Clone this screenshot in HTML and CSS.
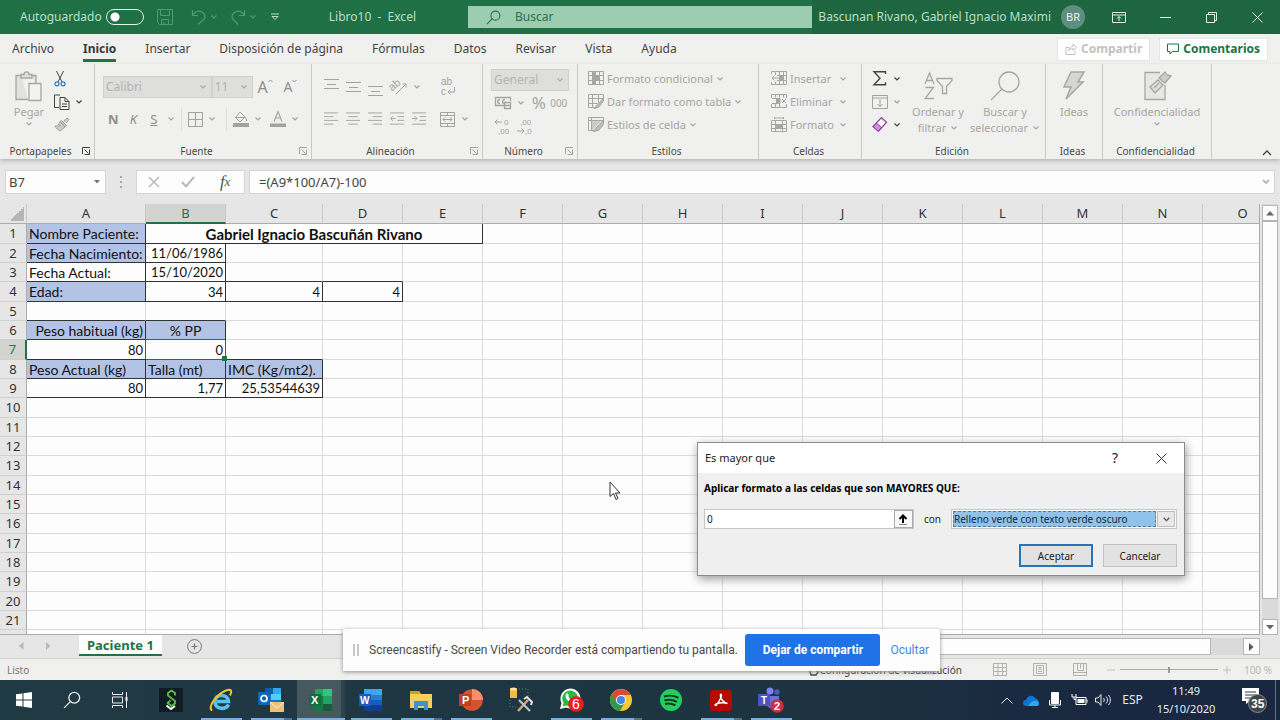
FILE: index.html
```html
<!DOCTYPE html>
<html lang="es">
<head>
<meta charset="utf-8">
<title>Libro10 - Excel</title>
<link rel="stylesheet" href="styles.css">
</head>
<body>
<svg class="defs" aria-hidden="true">
  <symbol id="chev" viewBox="0 0 8 8"><path d="M1.500 2.500 4 5l2.500-2.500" fill="none" stroke="currentColor" stroke-width="1.200"/></symbol>
  <symbol id="launch" viewBox="0 0 10 10"><path d="M1.500 8V1.500H9M3.500 3.500l4 4M8.500 3.500v5h-5" fill="none" stroke="currentColor"/></symbol>
  <symbol id="save" viewBox="0 0 16 16"><path d="M.5.500h15v15h-13l-2-2zM3.500.500v6h9v-6M4.500 15.500v-5h7v5M7 13v2" fill="none" stroke="currentColor"/></symbol>
  <symbol id="undo" viewBox="0 0 16 16"><path d="M1.500 1v5.500H7M1.500 6.500C4 3 7 1.500 10 2.500c5 2 5 7 1.500 9L7 15.500" fill="none" stroke="currentColor" stroke-width="1.200"/></symbol>
  <symbol id="redo" viewBox="0 0 16 16"><path d="M14.500 1v5.500H9M14.500 6.500C12 3 9 1.500 6 2.500c-5 2-5 7-1.500 9L8 15.500" fill="none" stroke="currentColor" stroke-width="1.200"/></symbol>
  <symbol id="mag" viewBox="0 0 16 16"><path d="M1 15l6-6" stroke="currentColor" stroke-width="1.200"/><circle cx="10" cy="6" r="4.800" fill="none" stroke="currentColor" stroke-width="1.200"/></symbol>
  <symbol id="left" viewBox="0 0 16 14"><path d="M0 .500h15M0 4.500h10M0 8.500h15M0 12.500h10" stroke="currentColor"/></symbol>
  <symbol id="center" viewBox="0 0 16 14"><path d="M0 .500h15M2.500 4.500h10M0 8.500h15M2.500 12.500h10" stroke="currentColor"/></symbol>
  <symbol id="right" viewBox="0 0 16 14"><path d="M0 .500h15M5 4.500h10M0 8.500h15M5 12.500h10" stroke="currentColor"/></symbol>
  <symbol id="outd" viewBox="0 0 16 14"><path d="M0 .500h15M8 4.500h7M8 8.500h7M0 12.500h15M6 6.500H1M3 4 .700 6.500 3 9" fill="none" stroke="currentColor"/></symbol>
  <symbol id="ind" viewBox="0 0 16 14"><path d="M0 .500h15M8 4.500h7M8 8.500h7M0 12.500h15M0 6.500h5M3 4l2.300 2.500L3 9" fill="none" stroke="currentColor"/></symbol>
  <symbol id="grid" viewBox="0 0 16 16"><path d="M.5.500h15v15H.5zM8 .500v15M.5 8h15" fill="none" stroke="currentColor" stroke-width="1.200"/></symbol>
</svg>

<header class="titlebar">
  <div class="title-left">
    <label class="autosave">Autoguardado <input type="checkbox" class="toggle"></label>
    <div class="quick">
      <button aria-label="Guardar"><svg width="16" height="16"><use href="#save"/></svg></button>
      <button aria-label="Deshacer"><svg width="16" height="16"><use href="#undo"/></svg><svg width="8" height="8"><use href="#chev"/></svg></button>
      <button aria-label="Rehacer"><svg width="16" height="16"><use href="#redo"/></svg><svg width="8" height="8"><use href="#chev"/></svg></button>
      <button class="lit" aria-label="Personalizar"><svg width="8" height="8" viewBox="0 0 8 8"><path d="M0 1h8M1 3.500h6L4 6.500z" fill="none" stroke="currentColor"/></svg></button>
    </div>
    <span class="doc">Libro10&nbsp; - &nbsp;Excel</span>
  </div>
  <label class="search"><svg width="15" height="15"><use href="#mag"/></svg><input type="text" placeholder="Buscar" aria-label="Buscar"></label>
  <div class="title-right">
    <span class="user">Bascunan Rivano, Gabriel Ignacio Maximi</span><span class="avatar">BR</span>
    <button aria-label="Opciones de cinta"><svg width="14" height="11" viewBox="0 0 14 11"><path d="M.5.500h13v10H.5zM.5 3h13M7 9V4.500M5 6.500l2-2 2 2" fill="none" stroke="currentColor"/></svg></button>
    <button aria-label="Minimizar"><svg width="11" height="11" viewBox="0 0 11 11"><path d="M0 5.500h11" stroke="currentColor"/></svg></button>
    <button aria-label="Restaurar"><svg width="11" height="11" viewBox="0 0 11 11"><path d="M.5 2.500h8v8h-8zM2.500 2.500v-2h8v8h-2" fill="none" stroke="currentColor"/></svg></button>
    <button aria-label="Cerrar"><svg width="11" height="11" viewBox="0 0 11 11"><path d="M.5.500l10 10M10.500.500l-10 10" stroke="currentColor"/></svg></button>
  </div>
</header>

<nav class="tabs">
  <button>Archivo</button><button class="on">Inicio</button><button>Insertar</button><button>Disposición de página</button><button>Fórmulas</button><button>Datos</button><button>Revisar</button><button>Vista</button><button>Ayuda</button>
  <div class="share">
    <button class="off"><svg width="12" height="12" viewBox="0 0 12 12"><path d="M4 4.500H1v7h9V8M3.500 8C4 5 6 3.500 8 3.500V1l3.500 3.500L8 7.500V5.500C6 5.500 4.500 6 3.500 8z" fill="none" stroke="currentColor"/></svg>Compartir</button>
    <button><svg width="12" height="12" viewBox="0 0 12 12"><path d="M.5 1h11v7.500h-6L3 11V8.500H.5z" fill="none" stroke="currentColor"/></svg>Comentarios</button>
  </div>
</nav>

<section class="ribbon">
  <div class="group g-clip">
    <div class="body">
      <button class="big"><svg width="30" height="32" viewBox="0 0 30 32"><path d="M14 29.500H2v-24h5M17 5.500h5V13M7 8V4.500h3C10 1 15 1 15 4.500h3V8z" fill="#e2e1de" stroke="currentColor" stroke-width="1.300"/><path d="M15 13.500h12v17H15z" fill="#f3f2ef" stroke="currentColor" stroke-width="1.300"/></svg><span>Pegar</span><svg width="8" height="8"><use href="#chev"/></svg></button>
      <div class="rows dark">
        <button aria-label="Cortar"><svg width="12" height="16" viewBox="0 0 12 16"><path d="M2.500 0l5.500 11M9.500 0L4 11" stroke="#444"/><circle cx="3" cy="12.800" r="2" fill="none" stroke="#2b7cc4" stroke-width="1.200"/><circle cx="9" cy="12.800" r="2" fill="none" stroke="#2b7cc4" stroke-width="1.200"/></svg></button>
        <button aria-label="Copiar"><svg width="16" height="16" viewBox="0 0 16 16"><path d="M5 13.500H.5V1H6M6 3.500h5l4 4v8H6zM11 3.500v4h4M8 10h5M8 12.500h5" fill="none" stroke="currentColor"/></svg><svg width="8" height="8"><use href="#chev"/></svg></button>
        <button class="dim" aria-label="Copiar formato"><svg width="16" height="15" viewBox="0 0 16 15"><path d="M9.500 4.500L13 1l2 1.500L12 6M7.500 3.500l5 5-1.500 1-5-5zM6 5l5 5-5 4c-2-1-4-3-5-5 2 0 4-1 5-4zM4 10l3-2" fill="#ccc" stroke="currentColor"/></svg></button>
      </div>
    </div>
    <div class="cap"><span>Portapapeles</span><svg class="dark" width="10" height="10"><use href="#launch"/></svg></div>
  </div>

  <div class="group g-font">
    <div class="body two">
      <div class="line"><span class="combo w-font"><select aria-label="Fuente" disabled><option>Calibri</option></select><svg width="8" height="8"><use href="#chev"/></svg></span><span class="combo w-size"><select aria-label="Tamaño" disabled><option>11</option></select><svg width="8" height="8"><use href="#chev"/></svg></span>
        <button class="grow" aria-label="Aumentar fuente"><span class="a-big">A</span><svg width="5" height="12" viewBox="0 0 5 12"><path d="M.5 3l2-2 2 2" fill="none" stroke="currentColor"/></svg></button><button class="grow" aria-label="Disminuir fuente"><span>A</span><svg width="5" height="12" viewBox="0 0 5 12"><path d="M.5 1l2 2 2-2" fill="none" stroke="currentColor"/></svg></button></div>
      <div class="line fmt">
        <button class="n"><b>N</b></button><button class="n"><i>K</i></button><button class="n"><u>S</u></button><svg class="after-s" width="8" height="8"><use href="#chev"/></svg>
        <button class="wide edge-l"><svg width="15" height="15"><use href="#grid"/></svg><svg width="8" height="8"><use href="#chev"/></svg></button>
        <button class="wide edge-l"><svg width="16" height="16" viewBox="0 0 16 16"><path d="M7 1l5 5-5 5-4.500-4.500zM2.500 6.500h9M12 6l2 4" fill="none" stroke="currentColor"/><path d="M0 12h16v4H0z" fill="currentColor"/></svg><svg width="8" height="8"><use href="#chev"/></svg></button>
        <button class="wide"><svg width="16" height="16" viewBox="0 0 16 16"><path d="M4 10.500L8 .500l4 10M5.500 7h5" fill="none" stroke="currentColor" stroke-width="1.200"/><path d="M0 12.500h16V16H0z" fill="currentColor"/></svg><svg width="8" height="8"><use href="#chev"/></svg></button>
      </div>
    </div>
    <div class="cap"><span>Fuente</span><svg width="10" height="10"><use href="#launch"/></svg></div>
  </div>

  <div class="group g-align">
    <div class="body two">
      <div class="line">
        <button class="ic" aria-label="Alinear arriba"><svg width="15" height="20" viewBox="0 0 15 20"><path d="M0 2.500h15M3 7.500h9M0 11.500h15" stroke="currentColor"/></svg></button><button class="ic" aria-label="Alinear al medio"><svg width="15" height="20" viewBox="0 0 15 20"><path d="M0 5.500h15M3 10.500h9M0 14.500h15" stroke="currentColor"/></svg></button><button class="ic" aria-label="Alinear abajo"><svg width="15" height="20" viewBox="0 0 15 20"><path d="M0 9.500h15M3 14.500h9M0 18.500h15" stroke="currentColor"/></svg></button><button class="wide" aria-label="Orientación"><svg width="18" height="16" viewBox="0 0 18 16"><text x="0" y="9" font-size="11" transform="rotate(-40 6 8)" fill="currentColor">ab</text><path d="M6 15L16 5M12.500 5H16v3.500" fill="none" stroke="currentColor"/></svg><svg width="8" height="8"><use href="#chev"/></svg></button>
        <button class="wrap" aria-label="Ajustar texto"><svg width="16" height="20" viewBox="0 0 16 20"><text x="1" y="8" font-size="10" fill="currentColor">ab</text><text x="1" y="18" font-size="10" fill="currentColor">c</text><path d="M14.500 10v5H8M10.500 12.500L8 15l2.500 2.500" fill="none" stroke="currentColor"/></svg></button></div>
      <div class="line"><button class="ic"><svg width="15" height="14"><use href="#left"/></svg></button><button class="ic"><svg width="15" height="14"><use href="#center"/></svg></button><button class="ic"><svg width="15" height="14"><use href="#right"/></svg></button><button class="ic"><svg width="15" height="14"><use href="#outd"/></svg></button><button class="ic"><svg width="15" height="14"><use href="#ind"/></svg></button>
        <button class="wrap"><svg width="15" height="15" viewBox="0 0 15 15"><path d="M.5.500h14v14H.5zM.5 3.500h14M.5 11.500h14M7.500 0v3.500M7.500 11.500V15M3 7.500h9M5 5.500l-2 2 2 2M10 5.500l2 2-2 2" fill="none" stroke="currentColor"/></svg><svg width="8" height="8"><use href="#chev"/></svg></button></div>
    </div>
    <div class="cap"><span>Alineación</span><svg width="10" height="10"><use href="#launch"/></svg></div>
  </div>

  <div class="group g-num">
    <div class="body two three">
      <div class="line"><span class="combo w-num"><select aria-label="Formato de número" disabled><option>General</option></select><svg width="8" height="8"><use href="#chev"/></svg></span></div>
      <div class="line"><button class="wide"><svg width="17" height="14" viewBox="0 0 17 14"><path d="M9 9.500H.5v-8h15V5M5 3.500C2 3.500 2 7.500 5 7.500M10 3.500C7 3.500 7 7.500 9 7.500M9.500 6.500h6v6h-6zM9.500 9.500h6" fill="none" stroke="currentColor" stroke-width="1.300"/></svg><svg width="8" height="8"><use href="#chev"/></svg></button><button class="pct">%</button><button class="mil">000</button></div>
      <div class="line"><button class="ic" aria-label="Aumentar decimales"><svg width="17" height="20" viewBox="0 0 17 20"><path d="M1 6h7M3.500 3.500L1 6l2.500 2.500" fill="none" stroke="currentColor"/><text x="10" y="9" font-size="8" fill="currentColor">0</text><text x="4" y="18" font-size="8" fill="currentColor">,00</text></svg></button><button class="ic" aria-label="Disminuir decimales"><svg width="17" height="20" viewBox="0 0 17 20"><path d="M1 15h7M5.500 12.500L8 15l-2.500 2.500" fill="none" stroke="currentColor"/><text x="4" y="9" font-size="8" fill="currentColor">,00</text><text x="9" y="18" font-size="8" fill="currentColor">,0</text></svg></button></div>
    </div>
    <div class="cap"><span>Número</span><svg width="10" height="10"><use href="#launch"/></svg></div>
  </div>

  <div class="group g-style">
    <div class="body"><div class="rows text">
      <button><svg width="16" height="15" viewBox="0 0 16 15"><path d="M.5.500h15v13H.5zM.5 4.500h15M.5 9.500h15M4.500.500v13M11.500.500v13" fill="none" stroke="currentColor"/><path d="M5 1h3v12H5zM8 5h3v4H8z" fill="currentColor"/></svg>Formato condicional<svg width="8" height="8"><use href="#chev"/></svg></button>
      <button><svg width="16" height="15" viewBox="0 0 16 15"><path d="M8 13.500H.5V.5h15v4M.5 4.500h15M.5 9.500h9M4.500.500v13M10.500.500v8" fill="none" stroke="currentColor"/><path d="M15.500 4L9 11l-3 3.500 4.500-1L15.500 7z" fill="#bbb" stroke="currentColor"/></svg>Dar formato como tabla<svg width="8" height="8"><use href="#chev"/></svg></button>
      <button><svg width="16" height="15" viewBox="0 0 16 15"><path d="M6 13.500H.5V.5h15v4M.5 3.500h15M3.500.500v13" fill="none" stroke="currentColor"/><path d="M4 4h9l-8 9H4z" fill="#ccc"/><path d="M15.500 3L9 10l-4 4.500 5.500-1 5-6z" fill="#bbb" stroke="currentColor"/></svg>Estilos de celda<svg width="8" height="8"><use href="#chev"/></svg></button>
    </div></div>
    <div class="cap"><span>Estilos</span></div>
  </div>

  <div class="group g-cells">
    <div class="body"><div class="rows text spread">
      <button><svg width="16" height="15" viewBox="0 0 16 15"><path d="M4.500 4V.5h11v13h-11V11M8.500.500v13M12.500.500v13M6 4.500h9M6 9.500h9M8 7H1M3.500 4.500L1 7l2.500 2.500M.5 3V.5h4M.5 11v2.500h4" fill="none" stroke="currentColor"/><path d="M9 5h3v4H9z" fill="currentColor"/></svg><span>Insertar</span><svg width="8" height="8"><use href="#chev"/></svg></button>
      <button><svg width="16" height="15" viewBox="0 0 16 15"><path d="M.5 4V.5h15V4M.5 10v3.500h15V10M4.500.500v3M8.500.500v3M12.500.500v3M4.500 10v3.500M8.500 10v3.500M1 4.500h8v5H1M11 5l4 4M15 5l-4 4" fill="none" stroke="currentColor"/><path d="M5 5h4v4H5z" fill="currentColor"/></svg><span>Eliminar</span><svg width="8" height="8"><use href="#chev"/></svg></button>
      <button><svg width="16" height="15" viewBox="0 0 16 15"><path d="M.5 3.500h15v11H.5zM.5 7.500h15M.5 11.500h15M4.500 3.500v11M11.500 3.500v11M3.500 0v2M12.500 0v2M3.500 1h9" fill="none" stroke="currentColor"/><path d="M5 8h6v3H5z" fill="currentColor"/></svg><span>Formato</span><svg width="8" height="8"><use href="#chev"/></svg></button>
    </div></div>
    <div class="cap"><span>Celdas</span></div>
  </div>

  <div class="group g-edit">
    <div class="body">
      <div class="rows dark">
        <button aria-label="Autosuma"><svg width="16" height="15" viewBox="0 0 16 15"><path d="M13.500 3V.7H2l6 6.500-6 6.600h11.500v-2.500" fill="none" stroke="currentColor" stroke-width="1.400"/></svg><svg width="8" height="8"><use href="#chev"/></svg></button>
        <button class="dim" aria-label="Rellenar"><svg width="16" height="14" viewBox="0 0 16 14"><path d="M.5.500h15v13H.5zM.5 3h15M8 4.500v7M5.500 9L8 11.500 10.500 9" fill="none" stroke="currentColor"/></svg><svg width="8" height="8"><use href="#chev"/></svg></button>
        <button aria-label="Borrar"><svg width="16" height="15" viewBox="0 0 16 15"><path d="M9.500.700l5 4.500-8 9-5.500-4.700z" fill="#fff" stroke="#93349e" stroke-width="1.200"/><path d="M4.500 6L9.500 10.500l-3.300 3.700L1 9.500z" fill="#cf92d6" stroke="#93349e"/></svg><svg width="8" height="8"><use href="#chev"/></svg></button>
      </div>
      <button class="big w-sort"><svg width="30" height="32" viewBox="0 0 30 32"><path d="M2 14L6.500 3 11 14M3.500 10.500h6M2.500 17.500h8L2 28.500h9M14 8.500h15v2l-5.500 6v7h-4v-7L14 10.500z" fill="none" stroke="currentColor" stroke-width="1.300"/></svg><span>Ordenar y</span><span>filtrar <svg width="8" height="8"><use href="#chev"/></svg></span></button>
      <button class="big"><svg width="30" height="32" viewBox="0 0 30 32"><circle cx="19" cy="12" r="10" fill="none" stroke="currentColor" stroke-width="1.300"/><path d="M1 30L12 19" stroke="currentColor" stroke-width="1.300"/></svg><span>Buscar y</span><span>seleccionar <svg width="8" height="8"><use href="#chev"/></svg></span></button>
    </div>
    <div class="cap"><span>Edición</span></div>
  </div>

  <div class="group g-ideas">
    <div class="body"><button class="big"><svg width="24" height="32" viewBox="0 0 24 32"><path d="M9 2h13l-6 10h5L4 29l5-12H2z" fill="#d6d6d3" stroke="currentColor" stroke-width="1.500"/></svg><span>Ideas</span></button></div>
    <div class="cap"><span>Ideas</span></div>
  </div>

  <div class="group g-conf">
    <div class="body"><button class="big"><svg width="30" height="32" viewBox="0 0 30 32"><path d="M18 2.500H3v27h20V15" fill="#e8e7e4" stroke="currentColor" stroke-width="1.300"/><path d="M8 17l8-7 5 5-8 8zM12 18l5-5" fill="#ddd" stroke="currentColor" stroke-width="1.300"/><path d="M17 8l6-6 2 3 4 1-6 7z" fill="#ccc" stroke="currentColor" stroke-width="1.300"/></svg><span>Confidencialidad</span><svg width="8" height="8"><use href="#chev"/></svg></button></div>
    <div class="cap"><span>Confidencialidad</span></div>
  </div>
  <button class="collapse" aria-label="Contraer la cinta"><svg width="10" height="7" viewBox="0 0 10 7"><path d="M1 6l4-4 4 4" fill="none" stroke="currentColor" stroke-width="1.300"/></svg></button>
</section>

<section class="formula">
  <label class="namebox"><input type="text" value="B7" aria-label="Cuadro de nombres"><svg width="6" height="4" viewBox="0 0 6 4"><path d="M0 0h6L3 3.500z" fill="#777"/></svg></label>
  <svg width="3" height="13" viewBox="0 0 3 13"><path d="M0 0h2v2H0zM0 5h2v2H0zM0 10h2v2H0z" fill="#a8a8a8"/></svg>
  <div class="fxbox">
    <button aria-label="Cancelar"><svg width="12" height="12" viewBox="0 0 12 12"><path d="M1 1l10 10M11 1L1 11" stroke="#b9b9b9" stroke-width="1.500"/></svg></button>
    <button aria-label="Introducir"><svg width="14" height="12" viewBox="0 0 14 12"><path d="M1 6l4 4.500L13 1" fill="none" stroke="#b9b9b9" stroke-width="2"/></svg></button>
    <button class="fx" aria-label="Insertar función"><i>f</i><i class="x">x</i></button>
  </div>
  <label class="fbar"><input type="text" value="=(A9*100/A7)-100" aria-label="Barra de fórmulas"><svg width="10" height="8" viewBox="0 0 8 8"><path d="M1 2l3 3 3-3" fill="none" stroke="#b5b5b5" stroke-width="1.800"/></svg></label>
</section>

<main class="work">
  <div class="sheet"><table id="cells"></table></div>
  <div class="vscroll">
    <button aria-label="Subir"><svg width="8" height="5" viewBox="0 0 8 5"><path d="M0 4.500L4 0l4 4.500z" fill="#666"/></svg></button>
    <div class="thumb"></div>
    <button aria-label="Bajar"><svg width="8" height="5" viewBox="0 0 8 5"><path d="M0 0h8L4 4.500z" fill="#666"/></svg></button>
  </div>
</main>

<div class="sheetbar">
  <button class="nav" aria-label="Hoja anterior"><svg width="5" height="8" viewBox="0 0 5 8"><path d="M4.500 0v8L0 4z" fill="#b8b8b8"/></svg></button>
  <button class="nav" aria-label="Hoja siguiente"><svg width="5" height="8" viewBox="0 0 5 8"><path d="M0 0v8l4.500-4z" fill="#b8b8b8"/></svg></button>
  <button class="tab">Paciente 1</button>
  <button class="add" aria-label="Hoja nueva"><svg width="15" height="15" viewBox="0 0 15 15"><circle cx="7.500" cy="7.500" r="6.900" fill="none" stroke="#777"/><path d="M4.500 7.500h6M7.500 4.500v6" stroke="#777" stroke-width="1.200"/></svg></button>
  <div class="hscroll"><div class="hthumb"></div><button aria-label="Derecha"><svg width="5" height="8" viewBox="0 0 5 8"><path d="M0 0v8l4.500-4z" fill="#555"/></svg></button></div>
</div>

<footer class="status">
  <span>Listo</span>
  <button class="cfg"><svg width="12" height="10" viewBox="0 0 12 10"><path d="M0 1h8v5M0 1v4h3M4 5h6l2 2-2 3H5L4 7z" fill="none" stroke="currentColor" stroke-width="1.400"/></svg>Configuración de visualización</button>
  <div class="views">
    <button aria-label="Normal"><svg width="14" height="13" viewBox="0 0 14 13"><path d="M.5.500h13v12H.5zM.5 4.500h13M.5 8.500h13M5 .500v12M9.500.500v12" fill="none" stroke="currentColor"/></svg></button>
    <button aria-label="Diseño de página"><svg width="14" height="13" viewBox="0 0 14 13"><path d="M.5.500h13v12H.5zM3.500 2.500h7v8h-7zM5 4.500h4M5 6.500h4M5 8.500h4" fill="none" stroke="currentColor"/></svg></button>
    <button aria-label="Salto de página"><svg width="14" height="13" viewBox="0 0 14 13"><path d="M.5.500h13v12H.5zM4.500.500v7h6v-7M7.500.500v5M.5 9.500h13" fill="none" stroke="currentColor"/></svg></button>
  </div>
  <div class="zoom"><button aria-label="Alejar"><svg width="8" height="8" viewBox="0 0 8 8"><path d="M0 4h8" stroke="currentColor"/></svg></button><input type="range" min="0" max="100" value="50" aria-label="Zoom"><button aria-label="Acercar"><svg width="8" height="8" viewBox="0 0 8 8"><path d="M0 4h8M4 0v8" stroke="currentColor"/></svg></button></div>
  <span class="pc">100 %</span>
</footer>

<nav class="taskbar">
  <button class="sys" aria-label="Inicio"><svg width="16" height="16" viewBox="0 0 16 16"><path d="M0 2.300L6.500 1.400v6.100H0zM7.500 1.200L16 0v7.500H7.500zM0 8.500h6.500v6.100L0 13.700zM7.500 8.500H16V16l-8.500-1.200z" fill="#fff"/></svg></button>
  <button class="sys" aria-label="Buscar"><svg width="18" height="18"><use href="#mag"/></svg></button>
  <button class="sys" aria-label="Vista de tareas"><svg width="16" height="16" viewBox="0 0 16 16"><path d="M.5 0v2.500h10V0M.5 16v-2.500h10V16M.5 5h10v6H.5zM14.500 0v16" fill="none" stroke="#e8e8e8"/><path d="M13.500 5h2v4h-2z" fill="#fff"/></svg></button>
  <button class="app first" aria-label="Screencastify"><svg width="24" height="24" viewBox="0 0 24 24"><path d="M0 0h24v24H0z" fill="#111c22"/><path d="M16 7.500V5l-3.500-2.500L9 5v2.500l7 5.500v2.500l-3.500 2.500-4-3 3-2.500" fill="none" stroke="#58b947" stroke-width="1.900" stroke-linejoin="round"/><path d="M7.500 17.500l4.500 3.500 4-3" fill="none" stroke="#fff" stroke-width="2"/></svg></button>
  <button class="app run" aria-label="Internet Explorer"><svg width="24" height="24" viewBox="0 0 24 24"><path d="M19.500 16.500C17 22.500 6 21.500 6 13.500S19 5.500 19.500 13.500H8" fill="none" stroke="#55c2f1" stroke-width="3.600"/><path d="M3 22.500C-2 19 8 6 17 2.500c6-2 6 1 4 5" fill="none" stroke="#f5c531" stroke-width="2"/></svg></button>
  <button class="app run multi" aria-label="Outlook"><svg width="27" height="26" viewBox="0 0 27 26"><path d="M7 1h16v16H7z" fill="#1a74ca"/><path d="M7 1h8v6H7z" fill="#0f5ba8"/><path d="M15 1h8v6h-8z" fill="#38a8e8"/><path d="M13 7h10v6H13z" fill="#50d0f5"/><path d="M0 5h12v13H0z" fill="#1067b8"/><circle cx="6" cy="11.500" r="3" fill="none" stroke="#fff" stroke-width="1.700"/><path d="M12 15h14v10H12z" fill="#f0bf78"/><path d="M12 15l7 6 7-6" fill="none" stroke="#fff3da"/></svg></button>
  <button class="app run active" aria-label="Excel"><svg width="24" height="22" viewBox="0 0 24 22"><path d="M6 0h17v22H6z" fill="#21a366"/><path d="M14 0h9v7h-9z" fill="#33c481"/><path d="M6 7h8v8H6zM6 15h8v7H6z" fill="#107c41"/><path d="M14 15h9v7h-9z" fill="#185c37"/><path d="M0 5h12v12H0z" fill="#0f6e3b"/><text x="2" y="15" font-size="11" font-weight="700" fill="#fff">X</text></svg></button>
  <button class="app run" aria-label="Word"><svg width="24" height="22" viewBox="0 0 24 22"><path d="M5 0h18v6H5z" fill="#41a5ee"/><path d="M5 6h18v5H5z" fill="#2b7cd3"/><path d="M5 11h18v5H5z" fill="#185abd"/><path d="M5 16h18v6H5z" fill="#103f91"/><path d="M0 5h12v12H0z" fill="#185abd"/><text x="1" y="15" font-size="10" font-weight="700" fill="#fff">W</text></svg></button>
  <button class="app run multi" aria-label="Explorador"><svg width="22" height="20" viewBox="0 0 22 20"><path d="M0 1h9l2 3h11v14H0z" fill="#f7cf5e"/><path d="M0 1h9l2 3H0z" fill="#d99e19"/><path d="M4 20v-9h14v9h-4v-4H8v4z" fill="#3c91d2"/></svg></button>
  <button class="app run" aria-label="PowerPoint"><svg width="24" height="22" viewBox="0 0 24 22"><circle cx="13" cy="11" r="10.800" fill="#d35230"/><path d="M13 0a11 11 0 0 1 11 11H13z" fill="#ff8f6b"/><path d="M0 5h12v12H0z" fill="#c43e1c"/><text x="3" y="15" font-size="11" font-weight="700" fill="#fff">P</text></svg></button>
  <button class="app" aria-label="Herramientas"><svg width="24" height="26" viewBox="0 0 24 26"><path d="M1 2h7v9H1z" fill="#eebc3f"/><ellipse cx="4.500" cy="2" rx="3.500" ry="1.500" fill="#ffe69b"/><path d="M10 2h9v8M1 13v7h7" fill="none" stroke="#5f8a46" stroke-dasharray="1 2"/><path d="M9 24L19 13" stroke="#d7a470" stroke-width="2.500"/><path d="M10 13l11 11" stroke="#b9c4ca" stroke-width="2.200"/><path d="M15 12l3-2 5 5-1 3" fill="none" stroke="#e3e7ea" stroke-width="2"/></svg></button>
  <button class="app run" aria-label="WhatsApp"><svg width="26" height="26" viewBox="0 0 26 26"><path d="M2 22l1.500-6A10 10 0 1 1 8 20.500z" fill="#fff"/><path d="M4.500 19.500l1-3.800a7.900 7.900 0 1 1 3 2.700z" fill="#27b943"/><path d="M8 7c2-2 3 1 2.500 2.500C11 12 13 13 14 13c2-1 4 1 1 2.500C11 16 6 11 8 7z" fill="#fff"/><circle cx="18" cy="17" r="7.800" fill="#ee1c1c"/><text x="14" y="22" font-size="14" fill="#fff">6</text></svg></button>
  <button class="app run multi" aria-label="Chrome"><svg width="22" height="22" viewBox="0 0 22 22"><circle cx="11" cy="11" r="11" fill="#f7c92c"/><path d="M1.500 5.500A11 11 0 0 1 20.600 6H11l-4.500 7z" fill="#df4838"/><path d="M1.500 5.500A11 11 0 0 0 10 22l4.500-8L6.500 13z" fill="#31984d"/><circle cx="11" cy="11" r="5" fill="#f4f4f4"/><circle cx="11" cy="11" r="4" fill="#4285e8"/></svg></button>
  <button class="app" aria-label="Spotify"><svg width="22" height="22" viewBox="0 0 22 22"><circle cx="11" cy="11" r="11" fill="#1ed05c"/><path d="M4 7.500c5-1.500 10-1 14.500 1.300M4.500 11.500c4-1.300 8.500-.800 12.300 1.300M5 15c4-1 7-.500 10.500 1.300" fill="none" stroke="#15331f" stroke-width="1.900"/></svg></button>
  <button class="app run multi" aria-label="Acrobat"><svg width="22" height="21" viewBox="0 0 22 21"><rect width="22" height="21" rx="3" fill="#b30b00"/><path d="M10.500 4c2 0 1 5-5 12M10.500 4c-1 4 3 9 7 9.500M5 15.500c-1-2 8-4 12.500-2" fill="none" stroke="#fff" stroke-width="1.500"/></svg></button>
  <button class="app run" aria-label="Teams"><svg width="28" height="26" viewBox="0 0 28 26"><circle cx="13" cy="4" r="3.500" fill="#7b83eb"/><circle cx="20" cy="5" r="2.700" fill="#5059c9"/><path d="M8 9h14v8c0 6-11 6-13 0z" fill="#6a72de"/><path d="M1 7h12v12H1z" fill="#4b53bc"/><text x="4" y="17" font-size="10" font-weight="700" fill="#fff">T</text><circle cx="20" cy="19" r="6.800" fill="#c4314b"/><text x="17" y="23" font-size="11" font-weight="700" fill="#fff">2</text></svg></button>
  <div class="tray">
    <button aria-label="Iconos ocultos"><svg width="12" height="7" viewBox="0 0 12 7"><path d="M.5 6.500L6 1l5.500 5.500" fill="none" stroke="currentColor"/></svg></button>
    <button aria-label="OneDrive"><svg width="16" height="11" viewBox="0 0 16 11"><path d="M3 11a3 3 0 0 1 0-6c1-5 7-6 9.500-1.500C16 4 17 9 14 11z" fill="#0f73cf"/><path d="M5 11c2-4 6-6 9-5 3 2 2 5 0 5z" fill="#2ba8ee"/></svg></button>
    <button aria-label="Micrófono"><svg width="12" height="16" viewBox="0 0 12 16"><rect x="2" width="8" height="12" rx="1" fill="#fff"/><path d="M.5 8v5h11V8M6 13v2.500M3 15.500h6" fill="none" stroke="#fff"/></svg></button>
    <button aria-label="Batería"><svg width="17" height="12" viewBox="0 0 17 12"><path d="M5 3.500h10v7H5zM16 5.500v3M1 0v3h4V0M3 3v2.500h2" fill="none" stroke="#fff"/><path d="M6.500 5h7v4h-7z" fill="#fff"/></svg></button>
    <button aria-label="Volumen"><svg width="16" height="12" viewBox="0 0 16 12"><path d="M.5 4v4H3l3 3.500V.5L3 4zM8.500 4c1 1 1 3 0 4M11 2.500c2 2 2 5 0 7M13.500 1c2.500 3 2.500 7 0 10" fill="none" stroke="currentColor"/></svg></button>
    <button class="lang">ESP</button>
    <button class="clock"><span>11:49</span><span>15/10/2020</span></button>
    <button class="action" aria-label="Notificaciones"><svg width="26" height="26" viewBox="0 0 26 26"><path d="M0 1h17v13H8l-4 3v-3H0z" fill="#fff"/><path d="M3 5h11M3 8h11M3 11h7" stroke="#26384a"/><circle cx="15.500" cy="16.500" r="9" fill="#3f444a" stroke="#888"/><text x="9" y="21" font-size="12" font-weight="700" fill="#fff">35</text></svg></button>
  </div>
</nav>

<form class="dialog" role="dialog" aria-label="Es mayor que">
  <div class="dlg-head"><span>Es mayor que</span><button type="button" class="help" aria-label="Ayuda">?</button><button type="button" aria-label="Cerrar"><svg width="11" height="11" viewBox="0 0 11 11"><path d="M.5.500l10 10M10.500.500l-10 10" stroke="#333"/></svg></button></div>
  <div class="dlg-body">
    <label class="lead" for="val">Aplicar formato a las celdas que son MAYORES QUE:</label>
    <div class="fields">
      <div class="ref"><input id="val" type="text" value="0"><button type="button" aria-label="Contraer diálogo"><svg width="10" height="11" viewBox="0 0 10 11"><path d="M5 9V2M1.500 5L5 1.500 8.500 5" fill="none" stroke="#000" stroke-width="2"/><path d="M1 10.500h8" stroke="#888"/></svg></button></div>
      <label for="fmt">con</label>
      <div class="pick"><select id="fmt"><option>Relleno verde con texto verde oscuro</option></select><span><svg width="9" height="9"><use href="#chev"/></svg></span></div>
    </div>
    <div class="acts"><button type="button" class="ok">Aceptar</button><button type="button">Cancelar</button></div>
  </div>
</form>

<div class="cast"><svg width="6" height="12" viewBox="0 0 6 12"><path d="M0 0h2v12H0zM4 0h2v12H4z" fill="#c6c6c6"/></svg><span>Screencastify - Screen Video Recorder está compartiendo tu pantalla.</span><button>Dejar de compartir</button><a href="#">Ocultar</a></div>

<svg class="cursor" width="13" height="20" viewBox="0 0 13 20"><path d="M1 1v14.500l3.500-3 2.500 6 2-1-2.500-5.500H11z" fill="#fff" stroke="#333"/></svg>
<script src="sheet.js"></script>
</body>
</html>
```
FILE: styles.css
```css
* { box-sizing: border-box; }
body { margin: 0; min-height: 100vh; display: flex; flex-direction: column; position: relative; font: 12px/16px "Noto Sans", "Open Sans", sans-serif; color: #444; background: #e6e6e6; overflow: hidden; }
button, input, select { font: inherit; color: inherit; background: none; border: 0; padding: 0; margin: 0; border-radius: 0; }
button { display: flex; align-items: center; justify-content: center; white-space: nowrap; }
select { appearance: none; opacity: 1; }
input { min-width: 0; outline: 0; }
svg { flex: none; display: block; overflow: visible; }
svg text { font-family: "Liberation Sans", sans-serif; }
.defs { position: absolute; width: 0; height: 0; }

.titlebar { height: 34px; display: grid; grid-template-columns: 1fr 344px 1fr; align-items: center; background: #1f7145; color: #b9dfc8; }
.title-left { display: flex; align-items: center; padding: 0 52px 0 20px; white-space: nowrap; }
.autosave { display: flex; align-items: center; gap: 4px; }
.toggle { appearance: none; width: 38px; height: 16px; border: 1px solid #e6f4ec; border-radius: 8px; background: radial-gradient(circle at 8px 7px, #fff 4px, transparent 5px); }
.quick { display: flex; align-items: center; gap: 12px; margin-left: 13px; color: #4f9b71; }
.quick button { gap: 3px; }
.quick button:first-child { margin-right: 6px; }
.quick .lit { color: #b9dfc8; margin-left: 2px; }
.doc { margin-left: auto; }
.search { height: 22px; background: #9ccdb0; display: flex; align-items: center; gap: 14px; padding: 0 18px; color: #27734a; }
.search input { flex: 1; }
.search input::placeholder { color: #27734a; opacity: 1; }
.title-right { display: flex; align-items: center; justify-content: flex-end; align-self: stretch; background: #1e6640; white-space: nowrap; }
.title-right button { width: 46px; height: 34px; color: #e0f1e7; }
.avatar { width: 24px; height: 24px; line-height: 24px; border-radius: 12px; background: #5f8d80; text-align: center; color: #e9f3ef; font-size: 11px; margin: 0 11px 0 10px; }

.tabs { height: 30px; display: flex; align-items: center; gap: 29px; padding: 0 12px; background: #f0f0ee; }
.tabs > button { height: 30px; }
.tabs > .on { font-weight: 700; color: #3a3a3a; box-shadow: inset 0 -2px #f0f0ee, inset 0 -5px #217346; }
.share { margin-left: auto; display: flex; gap: 9px; }
.share button { height: 23px; padding: 0 7px; gap: 4px; background: #fff; border: 1px solid #e6e6e4; color: #217346; font-weight: 700; }
.share .off { color: #c2c2c0; }

.ribbon { display: flex; height: 95px; background: #f0f0ee; color: #a6a6a4; box-shadow: 0 2px 4px #b8b8b8; position: relative; }
.group { display: flex; flex-direction: column; flex: none; padding-top: 3px; border-right: 1px solid #c9c9c7; }
.body { height: 76px; display: flex; }
.cap { height: 16px; display: flex; align-items: center; padding-right: 3px; font-size: 10px; color: #4a4a4a; }
.cap span { flex: 1; text-align: center; white-space: nowrap; }
.cap svg { color: #a3a3a1; }
.cap .dark, .dark { color: #444; }
.g-clip { width: 95px; }
.g-font { width: 217px; } .g-align { width: 171px; } .g-num { width: 95px; } .g-style { width: 181px; }
.g-cells { width: 103px; } .g-edit { width: 184px; } .g-ideas { width: 57px; } .g-conf { width: 109px; }
.big { flex-direction: column; justify-content: flex-start; padding-top: 3px; flex: 1; font-size: 11px; }
.big svg + span { margin-top: 2px; }
.big span { display: flex; align-items: center; gap: 4px; line-height: 16px; }
.g-clip .big { flex: none; width: 54px; padding-left: 4px; }
.rows { display: flex; flex-direction: column; }
.rows button { height: 23px; justify-content: flex-start; gap: 5px; }
.rows .dim { color: #a3a3a1; }
.g-edit .rows { padding-left: 10px; } .w-sort { flex: none; width: 64px; padding-left: 10px; }
.text button { gap: 3px; font-size: 11px; }
.text { padding-left: 10px; } .text.spread { padding-left: 12px; }
.text.spread span { min-width: 46px; text-align: left; }
.two { flex-direction: column; padding: 4px 8px 0; }
.line { height: 32px; display: flex; align-items: center; }
.three { padding-top: 1px; } .three .line { height: 23px; }
.combo { display: flex; align-items: center; height: 22px; padding: 0 4px 0 2px; background: #dededc; border: 1px solid #d0d0ce; color: #a9a9a7; }
.combo select { flex: 1; min-width: 0; height: 20px; color: #b3b3b1; }
.w-font { width: 112px; } .w-size { width: 42px; } .w-num { width: 78px; }
.grow { align-items: flex-start; width: 26px; color: #8f8f8d; font-size: 14px; } .a-big { font-size: 16px; }
.n { width: 21px; height: 24px; font-size: 13px; color: #8f8f8d; }
.after-s { margin-left: 3px; }
.wide { gap: 5px; height: 24px; padding: 0 4px; color: #a3a3a1; }
.fmt .edge-l { margin-left: 6px; border-left: 1px solid #dededc; padding-left: 6px; }
.ic { width: 22px; height: 24px; color: #a3a3a1; }
.wrap { margin-left: auto; width: 42px; height: 24px; gap: 6px; justify-content: flex-start; color: #a3a3a1; }
.g-align .two { padding-right: 0; }
.pct { font-size: 17px; width: 21px; } .mil { font-size: 10px; width: 22px; }
.collapse { margin: auto 8px 3px auto; color: #444; }

.formula { display: flex; align-items: center; gap: 4px; padding: 11px 5px 10px; font-size: 13px; }
.formula label, .fxbox { height: 24px; display: flex; align-items: center; background: #fdfdfd; border: 1px solid #d4d4d4; }
.namebox { width: 101px; padding: 0 5px 0 3px; }
.namebox input, .fbar input { flex: 1; width: 20px; }
.formula > svg { margin: 0 9px 0 10px; }
.fxbox { width: 109px; justify-content: space-around; }
.fx { font: 17px/20px "Liberation Serif", serif; color: #555; width: 16px; } .fx .x { font-size: 13px; }
.fbar { flex: 1; padding: 0 3px 0 9px; }

.work { display: flex; flex: 1 0 431px; gap: 2px; padding-right: 2px; height: 431px; }
.sheet { flex: 1; min-width: 0; overflow: hidden; border-right: 1px solid #ababab; border-bottom: 1px solid #ababab; }
table { table-layout: fixed; border-collapse: separate; border-spacing: 0; width: 1283px; }
th { font-weight: 400; font-size: 13px; line-height: 17px; padding: 0; color: #333; background: #e6e6e6; border-right: 1px solid #c6c6c6; border-bottom: 1px solid #ababab; text-align: center; }
tbody th { border-bottom-color: #d0d0d0; border-right-color: #ababab; }
thead th { height: 20px; }
th.cur { background: #d2d4d2; color: #217346; }
thead th.cur { border-bottom: 2px solid #217346; }
tbody th.cur { border-right: 2px solid #217346; }
.corner::after { content: ""; display: block; margin-left: auto; margin-right: 2px; width: 14px; height: 14px; background: linear-gradient(135deg, transparent 50%, #b5b5b5 50%); }
td { height: 19px; padding: 0 2px; font: 14px/17px Lato, "Open Sans", sans-serif; color: #111; background: #fdfdfd; border-right: 1px solid #dadada; border-bottom: 1px solid #dadada; white-space: nowrap; overflow: hidden; }
tr:nth-child(3n+1) td { height: 20px; line-height: 18px; }
td.box { border-color: #333; }
td.base { border-bottom-color: #333; }
td.fill { background: #b2c3e5; }
td.num { text-align: right; font-size: 13px; } td.end { text-align: right; } td.mid { text-align: center; } td.strong { font-weight: 700; font-size: 15px; }
td.sel { position: relative; overflow: visible; border-color: #217346; box-shadow: -1px -1px #217346; }
td.sel::after { content: ""; position: absolute; right: -2px; bottom: -2px; width: 5px; height: 5px; background: #217346; }
.vscroll { width: 16px; display: flex; flex-direction: column; padding-top: 1px; background: #dadada; }
.vscroll button { height: 16px; background: #fdfdfd; border: 1px solid #b5b5b5; }
.vscroll .thumb { flex: 1; margin-bottom: 20px; background: #fdfdfd; border: 1px solid #b5b5b5; }

.sheetbar { height: 24px; display: flex; align-items: flex-start; padding: 0 20px 0 8px; background: #e6e6e6; border-bottom: 1px solid #d2d2d2; }
.nav { width: 27px; height: 22px; }
.tab { height: 21px; margin-left: 17px; padding: 0 8px; background: #fff; color: #217346; font-weight: 700; font-size: 13px; border-bottom: 2px solid #217346; }
.add { height: 23px; margin-left: 25px; }
.hscroll { flex: 1; margin: 3px 0 0 150px; display: flex; background: #dadada; height: 17px; }
.hthumb { flex: 1; margin-right: 32px; background: #fdfdfd; border: 1px solid #b5b5b5; }
.hscroll button { width: 17px; background: #fdfdfd; border: 1px solid #b5b5b5; }

.status { height: 21px; display: flex; align-items: center; padding: 0 8px 0 7px; background: #f0f0ee; font-size: 10px; color: #777; }
.cfg { margin-left: auto; gap: 2px; color: #444; }
.views { display: flex; gap: 26px; margin: 0 20px 0 31px; color: #b3b3ab; }
.zoom { display: flex; align-items: center; gap: 5px; color: #c2c2ba; }
.zoom input { appearance: none; width: 98px; height: 1px; background: #aaa; }
.zoom input::-webkit-slider-thumb { appearance: none; width: 2px; height: 6px; background: #999; }
.pc { margin-left: 13px; color: #b8b8b0; white-space: nowrap; }

.taskbar { height: 40px; display: flex; background: linear-gradient(90deg, #203a44, #1d3440 60%, #192840 85%); color: #e6eaee; }
.taskbar > button { height: 40px; flex: none; }
.sys { width: 48px; } .app { width: 50px; position: relative; } .first { margin-left: 2px; }
.run::after { content: ""; position: absolute; left: 5px; right: 4px; bottom: 0; height: 2px; background: #76b0e0; }
.multi::after { background: linear-gradient(90deg, #76b0e0 33px, #4c7396 33px); }
.active { background: linear-gradient(90deg, transparent 1px, #45595f 1px, #45595f 45px, #2d444c 45px, #2d444c 49px, transparent 49px); }
.active::after { left: 1px; right: 1px; }
.tray { margin-left: auto; display: flex; padding-right: 4px; }
.tray button { width: 24px; } .tray .lang { width: 35px; }
.tray .clock { width: 72px; flex-direction: column; line-height: 18px; font-size: 11px; }
.tray .action { width: 54px; padding-left: 12px; border-right: 1px solid #65717f; }

.dialog { position: absolute; left: 697px; top: 442px; width: 488px; background: #efefef; border: 1px solid #8c8c8c; box-shadow: 1px 3px 9px #9a9a9a; color: #222; font-size: 10px; }
.dlg-head { height: 30px; display: flex; align-items: center; padding: 0 0 0 7px; background: #fff; font-size: 11px; }
.dlg-head span { flex: 1; } .dlg-head button { width: 46px; height: 30px; } .dlg-head .help { font-size: 14px; }
.dlg-body { padding: 7px 7px 8px 6px; }
.lead { display: block; font-weight: 700; color: #000; font-size: 10px; line-height: 16px; }
.fields { display: flex; align-items: center; margin-top: 13px; gap: 10px; }
.ref { display: flex; flex: 1; height: 20px; background: #fff; border: 1px solid #c6c6c6; }
.ref input { flex: 1; padding-left: 2px; }
.ref button { width: 19px; background: #f8f8f8; border: 1px solid #aaa; }
.pick { display: flex; width: 226px; height: 20px; padding: 1px; border: 1px solid #c6c6c6; background: #fff; }
.pick select { flex: 1; min-width: 0; background: #91c3ea; border: 1px dashed #597b92; color: #14293a; line-height: 14px; }
.pick span { display: flex; align-items: center; justify-content: center; width: 18px; margin-left: 1px; background: #e8e8e8; border: 1px solid #bcbcbc; color: #555; }
.acts { display: flex; justify-content: flex-end; gap: 10px; margin-top: 15px; }
.acts button { width: 74px; height: 23px; background: #e2e2e2; border: 1px solid #c0c0c0; }
.acts .ok { border: 2px solid #2b73b8; }

.cast { position: absolute; left: 343px; bottom: 49px; width: 597px; height: 42px; display: flex; align-items: center; padding: 0 11px 0 10px; background: #fdfdfd; box-shadow: 0 1px 4px #8c8c8c; color: #4a4a4a; font-family: Roboto, "Noto Sans", sans-serif; white-space: nowrap; }
.cast span { margin-left: 10px; }
.cast button { margin-left: auto; flex: none; width: 135px; height: 32px; border-radius: 3px; background: #1f73e6; color: #fff; font-weight: 700; }
.cast a { margin-left: 10px; color: #4b83dc; text-decoration: none; }
.cursor { position: absolute; left: 609px; top: 481px; }
```
FILE: sheet.js
```js
const widths = [27, 119, 80, 97, 80, 80, 80, 80, 80, 80, 80, 80, 80, 80, 80, 80];
const letters = 'ABCDEFGHIJKLMNO'.split('');
const cells = {
  A1: ['Nombre Paciente:', 'box fill'],
  B1: ['Gabriel Ignacio Bascuñán Rivano', 'box mid strong', 4],
  A2: ['Fecha Nacimiento:', 'box fill'], B2: ['11/06/1986', 'box num'],
  A3: ['Fecha Actual:', 'box'], B3: ['15/10/2020', 'box num'], C3: ['', 'base'], D3: ['', 'base'],
  A4: ['Edad:', 'box fill'], B4: ['34', 'box num'], C4: ['4', 'box num'], D4: ['4', 'box num'],
  A5: ['', 'base'], B5: ['', 'base'],
  A6: ['Peso habitual (kg)', 'box fill end'], B6: ['% PP', 'box fill mid'],
  A7: ['80', 'box num'], B7: ['0', 'sel num'], C7: ['', 'base'],
  A8: ['Peso Actual (kg)', 'box fill'], B8: ['Talla (mt)', 'box fill'], C8: ['IMC (Kg/mt2).', 'box fill'],
  A9: ['80', 'box num'], B9: ['1,77', 'box num'], C9: ['25,53544639', 'box num']
};
let html = '<colgroup>' + widths.map(w => `<col style="width:${w}px">`).join('') + '</colgroup>';
html += '<thead><tr><th class="corner"></th>' + letters.map(l => `<th${l === 'B' ? ' class="cur"' : ''}>${l}</th>`).join('') + '</tr></thead><tbody>';
for (let r = 1; r <= 22; r++) {
  html += `<tr><th${r === 7 ? ' class="cur"' : ''}>${r < 22 ? r : ''}</th>`;
  for (let c = 0; c < letters.length; c++) {
    const [text, cls, span] = cells[letters[c] + r] || ['', ''];
    html += `<td class="${cls}" colspan="${span || 1}">${text}</td>`;
    if (span) c += span - 1;
  }
  html += '</tr>';
}
document.getElementById('cells').innerHTML = html + '</tbody>';
```
